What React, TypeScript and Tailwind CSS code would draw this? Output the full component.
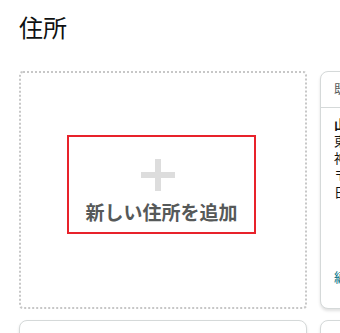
import { ReactNode } from "react";

function AddressCard({ children }: { children?: ReactNode }) {
	return (
		<div className="h-[238px] rounded-[8px] border border-[#d5d9d9] bg-white shadow-[0_2px_3px_rgba(0,0,0,0.12)] overflow-hidden">
			{children}
		</div>
	);
}

function PlusIcon() {
	return (
		<svg width="34" height="32" viewBox="0 0 34 32" className="mr-[8px]">
			<rect x="0" y="13" width="34" height="6" fill="#dddddd" />
			<rect x="14" y="0" width="6" height="32" fill="#dddddd" />
		</svg>
	);
}

export default function App() {
	return (
		<div
			className="w-[340px] h-[333px] overflow-hidden bg-white text-[#0f1111]"
			style={{ fontFamily: '"Noto Sans", "Noto Sans CJK JP", sans-serif' }}
		>
			<div className="pl-[19px] pt-[12px]">
				<h1 className="text-[24px] leading-[32px] font-normal">住所</h1>
				<div className="mt-[27px] grid grid-cols-[288px_288px] gap-x-[13px] gap-y-[11px]">
					<div className="h-[238px] rounded-[4px] border-2 border-dotted border-[#c7c7c7] pt-[62px] pl-[46px] cursor-pointer">
						<div className="w-[189px] h-[99px] border-2 border-[#e8222b] flex flex-col items-center pt-[22px]">
							<PlusIcon />
							<span className="mt-[10px] text-[19px] leading-[24px] font-bold text-[#565959]">
								新しい住所を追加
							</span>
						</div>
					</div>

					<AddressCard>
						<div className="h-[36px] border-b border-[#d5d9d9] px-[13px] flex items-center text-[12px] text-[#565959]">
							既定の住所
						</div>
						<div className="px-[13px] pt-[8px] text-[13px] leading-[17px]">
							<p className="font-bold">山田 太郎</p>
							<p>東京都渋谷区</p>
							<p>神南1-2-3</p>
							<p>〒150-0041</p>
							<p>日本</p>
							<p className="mt-[68px] text-[#007185]">編集 | 削除</p>
						</div>
					</AddressCard>

					<AddressCard />
					<AddressCard />
				</div>
			</div>
		</div>
	);
}
